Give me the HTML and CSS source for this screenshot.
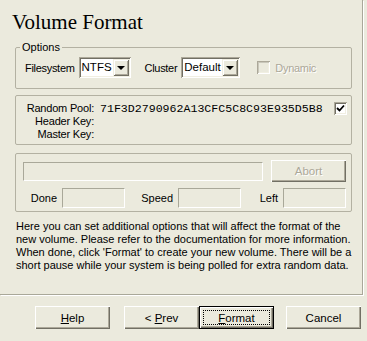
FILE: index.html
```html
<!DOCTYPE html>
<html lang="en">
<head>
    <meta charset="UTF-8">
    <title>Volume Format</title>
    <link rel="stylesheet" href="styles.css">
</head>
<body>
    <div class="wizard">
        <div class="page">
            <h1 class="title">Volume Format</h1>

            <fieldset class="options">
                <legend>Options</legend>
                <div class="options-row">
                    <span class="fs-label">Filesystem</span>
                    <div class="combo combo-fs">
                        <span class="combo-value">NTFS</span>
                        <span class="combo-arrow"><span class="arrow"></span></span>
                    </div>
                    <span class="cluster-label">Cluster</span>
                    <div class="combo combo-cluster">
                        <span class="combo-value">Default</span>
                        <span class="combo-arrow"><span class="arrow"></span></span>
                    </div>
                    <span class="checkbox checkbox-disabled dynamic-box"></span>
                    <span class="disabled-text dynamic-label">Dynamic</span>
                </div>
            </fieldset>

            <div class="panel keys">
                <span class="key-label">Random Pool:</span>
                <span class="key-value">71F3D2790962A13CFC5C8C93E935D5B8</span>
                <span class="checkbox pool-check">
                    <svg width="9" height="9" viewBox="0 0 9 9"><polyline points="1,4 3.5,6.5 8,1.5" fill="none" stroke="#000" stroke-width="1.8"/></svg>
                </span>
                <span class="key-label">Header Key:</span>
                <span class="key-value"></span>
                <span></span>
                <span class="key-label">Master Key:</span>
                <span class="key-value"></span>
                <span></span>
            </div>

            <div class="panel progress">
                <div class="progress-row">
                    <div class="progress-bar"></div>
                    <button class="btn btn-disabled">Abort</button>
                </div>
                <div class="stats-row">
                    <div class="stat stat-done"><span>Done</span><span class="field"></span></div>
                    <div class="stat stat-speed"><span>Speed</span><span class="field"></span></div>
                    <div class="stat stat-left"><span>Left</span><span class="field"></span></div>
                </div>
            </div>

            <p class="info">
                Here you can set additional options that will affect the format of the<br>
                new volume. Please refer to the documentation for more information.<br>
                When done, click 'Format' to create your new volume. There will be a<br>
                short pause while your system is being polled for extra random data.
            </p>
        </div>

        <div class="buttons">
            <button class="btn btn-help"><u>H</u>elp</button>
            <button class="btn btn-prev">&lt; <u>P</u>rev</button>
            <button class="btn btn-default"><span class="focus"><u>F</u>ormat</span></button>
            <button class="btn btn-cancel">Cancel</button>
        </div>
    </div>
</body>
</html>
```

FILE: styles.css
```css
body {
    margin: 0;
    background-color: #ebeadd;
    font-family: "Liberation Sans", Arial, sans-serif;
    font-size: 11px;
    color: #000;
}
.wizard {
    width: 367px;
    height: 341px;
}
.page {
    width: 363px;
    height: 295px;
    box-sizing: border-box;
    border-right: 1px solid #a9a899;
    border-bottom: 1px solid #a9a899;
    box-shadow: 1px 1px 0 #fff;
    overflow: hidden;
}
.title {
    margin: 10px 0 0 12px;
    font-family: "Liberation Serif", "Times New Roman", serif;
    font-size: 21px;
    font-weight: normal;
    line-height: 24px;
}

/* Options group */
.options {
    margin: 7px 10px 0 15px;
    padding: 3px 0 10px 4px;
    border: 1px solid #b3b1a2;
    border-radius: 2px;
}
.options legend {
    padding: 0 2px;
    line-height: 13px;
}
.options-row {
    display: flex;
    align-items: center;
    height: 21px;
    padding-left: 5px;
    letter-spacing: -0.3px;
}
.fs-label {
    margin-right: 4px;
}
.cluster-label {
    margin-left: 14px;
    margin-right: 4px;
}
.combo {
    display: flex;
    height: 21px;
    box-sizing: border-box;
    padding: 2px;
    background-color: #fff;
    box-shadow: inset 1px 1px #aca899, inset -1px -1px #fff, inset 2px 2px #716f64, inset -2px -2px #f1efe2;
}
.combo-fs {
    width: 52px;
}
.combo-cluster {
    width: 59px;
}
.combo-value {
    flex: 1;
    padding-left: 1px;
    line-height: 17px;
    font-size: 11.5px;
    letter-spacing: 0;
}
.combo-arrow {
    width: 16px;
    display: flex;
    align-items: center;
    justify-content: center;
    background-color: #ebeadd;
    box-shadow: inset 1px 1px #f1efe2, inset -1px -1px #716f64, inset 2px 2px #fff, inset -2px -2px #aca899;
}
.arrow {
    width: 0;
    height: 0;
    border-left: 4px solid transparent;
    border-right: 4px solid transparent;
    border-top: 4px solid #000;
    margin-top: 1px;
}
.checkbox {
    width: 13px;
    height: 13px;
    box-sizing: border-box;
    display: flex;
    align-items: center;
    justify-content: center;
    background-color: #fff;
    box-shadow: inset 1px 1px #aca899, inset -1px -1px #fff, inset 2px 2px #716f64, inset -2px -2px #f1efe2;
}
.checkbox-disabled {
    background-color: #ebeadd;
    box-shadow: inset 1px 1px #aca899, inset -1px -1px #fff, inset 2px 2px #c9c7ba, inset -2px -2px #f1efe2;
}
.dynamic-box {
    margin-left: 17px;
}
.dynamic-label {
    margin-left: 5px;
}
.disabled-text {
    color: #aca899;
    text-shadow: 1px 1px 0 #fff;
}

/* Panels */
.panel {
    margin: 0 10px 0 15px;
    border: 1px solid #b3b1a2;
    border-radius: 2px;
}
.keys {
    margin-top: 6px;
    padding: 6px 4px 3px 0;
    display: grid;
    grid-template-columns: 78px 1fr 13px;
    column-gap: 6px;
    line-height: 13px;
}
.key-label {
    text-align: right;
    letter-spacing: -0.2px;
}
.key-value {
    font-family: "Liberation Mono", "Courier New", monospace;
    font-size: 11.6px;
}
.pool-check {
    align-self: start;
}
.progress {
    margin-top: 8px;
    padding: 6px 5px 3px 7px;
}
.progress-row {
    display: flex;
    align-items: center;
    justify-content: space-between;
}
.progress-bar {
    width: 240px;
    height: 19px;
    box-sizing: border-box;
    border: 1px solid;
    border-color: #a9a899 #fff #fff #a9a899;
}
.stats-row {
    display: flex;
    margin-top: 6px;
}
.stat {
    display: flex;
    align-items: center;
    justify-content: flex-end;
    gap: 5px;
}
.stat-done {
    width: 102px;
}
.stat-speed {
    width: 116px;
}
.stat-left {
    width: 105px;
}
.field {
    width: 63px;
    height: 20px;
    box-sizing: border-box;
    border: 1px solid;
    border-color: #a9a899 #fff #fff #a9a899;
}
.info {
    margin: 8px 10px 0 16px;
    line-height: 13px;
    white-space: nowrap;
}

/* Buttons */
.btn {
    width: 75px;
    height: 22px;
    padding: 0;
    border: none;
    background-color: #ebeadd;
    font-family: "Liberation Sans", Arial, sans-serif;
    font-size: 11.5px;
    color: #000;
    box-shadow: inset 1px 1px #fff, inset -1px -1px #716f64, inset -2px -2px #aca899;
}
.btn-disabled {
    color: #aca899;
    text-shadow: 1px 1px 0 #fff;
}
.buttons {
    display: flex;
    padding-top: 11px;
}
.buttons .btn {
    height: 23px;
}
.btn-help {
    margin-left: 35px;
}
.btn-prev {
    margin-left: 14px;
}
.btn-cancel {
    margin-left: 12px;
}
.btn-default {
    padding: 4px;
    box-shadow: inset 0 0 0 1px #000, inset 2px 2px #fff, inset -2px -2px #716f64, inset -3px -3px #aca899;
}
.focus {
    display: flex;
    align-items: center;
    justify-content: center;
    height: 100%;
    box-sizing: border-box;
    border: 1px dotted #000;
}
```
